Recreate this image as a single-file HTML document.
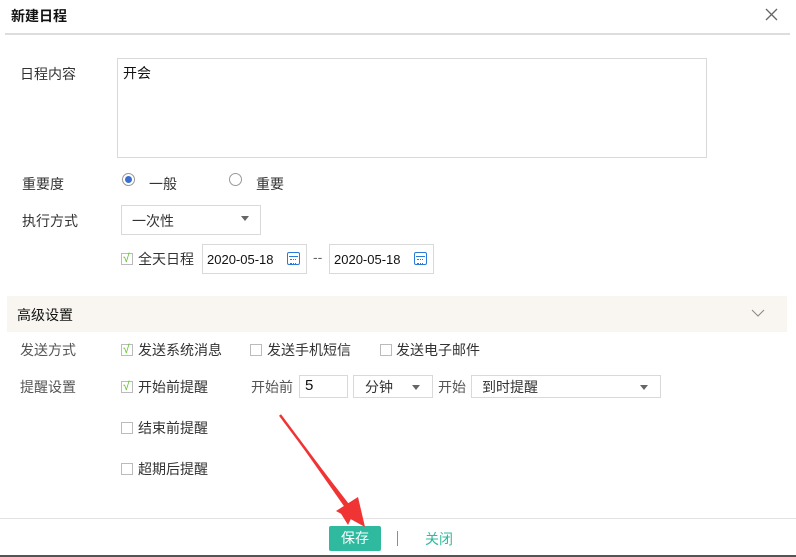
<!DOCTYPE html>
<html><head><meta charset="utf-8"><style>
*{margin:0;padding:0;box-sizing:border-box}
body{width:796px;height:557px;position:relative;background:#fff;font-family:"Liberation Sans","Noto Sans CJK SC",sans-serif;font-size:14px;line-height:16px;color:#333;overflow:hidden}
.a{position:absolute;white-space:nowrap}
.box{position:absolute;border:1px solid #d9d9d9;background:#fff}
.cb{position:absolute;width:12px;height:12px;border:1px solid #bbb;background:#fff}
.cb.on::after{content:"√";position:absolute;left:1px;top:-3px;font-size:12px;line-height:14px;color:#52c41a}
.tri{position:absolute;width:0;height:0;border-left:4px solid transparent;border-right:4px solid transparent;border-top:5px solid #666}
.cal{position:absolute;width:13px;height:13px;border:1.5px solid #2b7bd6;border-radius:2px}
.cal::before{content:"";position:absolute;left:1px;right:1px;top:3px;height:1px;background:#2b7bd6}
.cal::after{content:"";position:absolute;left:2px;top:6px;width:6px;height:3px;border-top:1px dotted #2b7bd6;border-bottom:1px dotted #2b7bd6}
</style></head><body>
<div class="a" style="left:11px;top:8px;font-weight:bold;font-size:14px;color:#111">新建日程</div>
<svg class="a" style="left:765px;top:8px" width="13" height="13"><path d="M1 1L12 12M12 1L1 12" stroke="#666" stroke-width="1.3"/></svg>
<div class="a" style="left:5px;top:33px;width:785px;height:2px;background:#ddd"></div>

<div class="a" style="left:20px;top:66px">日程内容</div>
<div class="box" style="left:117px;top:58px;width:590px;height:100px"></div>
<div class="a" style="left:123px;top:65px;color:#111">开会</div>

<div class="a" style="left:22px;top:176px">重要度</div>
<div class="a" style="left:122px;top:173px;width:13px;height:13px;border:1px solid #999;border-radius:50%"><div style="position:absolute;left:2px;top:2px;width:7px;height:7px;border-radius:50%;background:#3a6fd0"></div></div>
<div class="a" style="left:149px;top:176px">一般</div>
<div class="a" style="left:229px;top:173px;width:13px;height:13px;border:1px solid #999;border-radius:50%"></div>
<div class="a" style="left:256px;top:176px">重要</div>

<div class="a" style="left:22px;top:213px">执行方式</div>
<div class="box" style="left:121px;top:205px;width:140px;height:30px"></div>
<div class="a" style="left:132px;top:213px">一次性</div>
<div class="tri" style="left:241px;top:216px"></div>

<div class="cb on" style="left:121px;top:253px"></div>
<div class="a" style="left:138px;top:251px;font-size:14px">全天日程</div>
<div class="box" style="left:202px;top:244px;width:105px;height:30px"></div>
<div class="a" style="left:207px;top:252px;color:#111;font-size:13px">2020-05-18</div>
<div class="cal" style="left:287px;top:252px"></div>
<div class="a" style="left:313px;top:249px;color:#666">--</div>
<div class="box" style="left:329px;top:244px;width:105px;height:30px"></div>
<div class="a" style="left:334px;top:252px;color:#111;font-size:13px">2020-05-18</div>
<div class="cal" style="left:414px;top:252px"></div>

<div class="a" style="left:7px;top:296px;width:780px;height:36px;background:#f9f6f1"></div>
<div class="a" style="left:17px;top:307px;color:#111">高级设置</div>
<svg class="a" style="left:751px;top:309px" width="14" height="9"><path d="M1 1L7 7L13 1" stroke="#888" fill="none"/></svg>

<div class="a" style="left:20px;top:342px;color:#555">发送方式</div>
<div class="cb on" style="left:121px;top:344px"></div>
<div class="a" style="left:138px;top:342px">发送系统消息</div>
<div class="cb" style="left:250px;top:344px"></div>
<div class="a" style="left:267px;top:342px">发送手机短信</div>
<div class="cb" style="left:380px;top:344px"></div>
<div class="a" style="left:396px;top:342px">发送电子邮件</div>

<div class="a" style="left:20px;top:379px;color:#555">提醒设置</div>
<div class="cb on" style="left:121px;top:381px"></div>
<div class="a" style="left:138px;top:379px">开始前提醒</div>
<div class="a" style="left:251px;top:379px;color:#555">开始前</div>
<div class="box" style="left:299px;top:375px;width:49px;height:23px"></div>
<div class="a" style="left:305px;top:378px;font-size:15px;color:#111">5</div>
<div class="box" style="left:353px;top:375px;width:80px;height:23px"></div>
<div class="a" style="left:365px;top:379px">分钟</div>
<div class="tri" style="left:412px;top:385px"></div>
<div class="a" style="left:438px;top:379px;color:#555">开始</div>
<div class="box" style="left:471px;top:375px;width:190px;height:23px"></div>
<div class="a" style="left:482px;top:379px">到时提醒</div>
<div class="tri" style="left:640px;top:385px"></div>

<div class="cb" style="left:121px;top:422px"></div>
<div class="a" style="left:138px;top:420px">结束前提醒</div>
<div class="cb" style="left:121px;top:463px"></div>
<div class="a" style="left:138px;top:461px">超期后提醒</div>

<div class="a" style="left:0;top:518px;width:796px;height:1px;background:#e3e3e3"></div>
<div class="a" style="left:329px;top:526px;width:52px;height:25px;background:#2fb99e;border-radius:2px;color:#fff;text-align:center;line-height:25px;font-size:14px">保存</div>
<div class="a" style="left:397px;top:531px;width:1px;height:15px;background:#2fb99e"></div>
<div class="a" style="left:425px;top:531px;color:#2fb99e;font-size:14px">关闭</div>
<div class="a" style="left:0;top:555px;width:796px;height:2px;background:#555"></div>

<svg class="a" style="left:270px;top:405px" width="110" height="130"><path d="M10 10L82 103L88 99L78 120L70 107L76 104Z" fill="#f03434"/><path d="M10 10L78 101" stroke="#f03434" stroke-width="2.5"/><path d="M66 106L95 122L88 92Z" fill="#f03434"/></svg>
</body></html>
